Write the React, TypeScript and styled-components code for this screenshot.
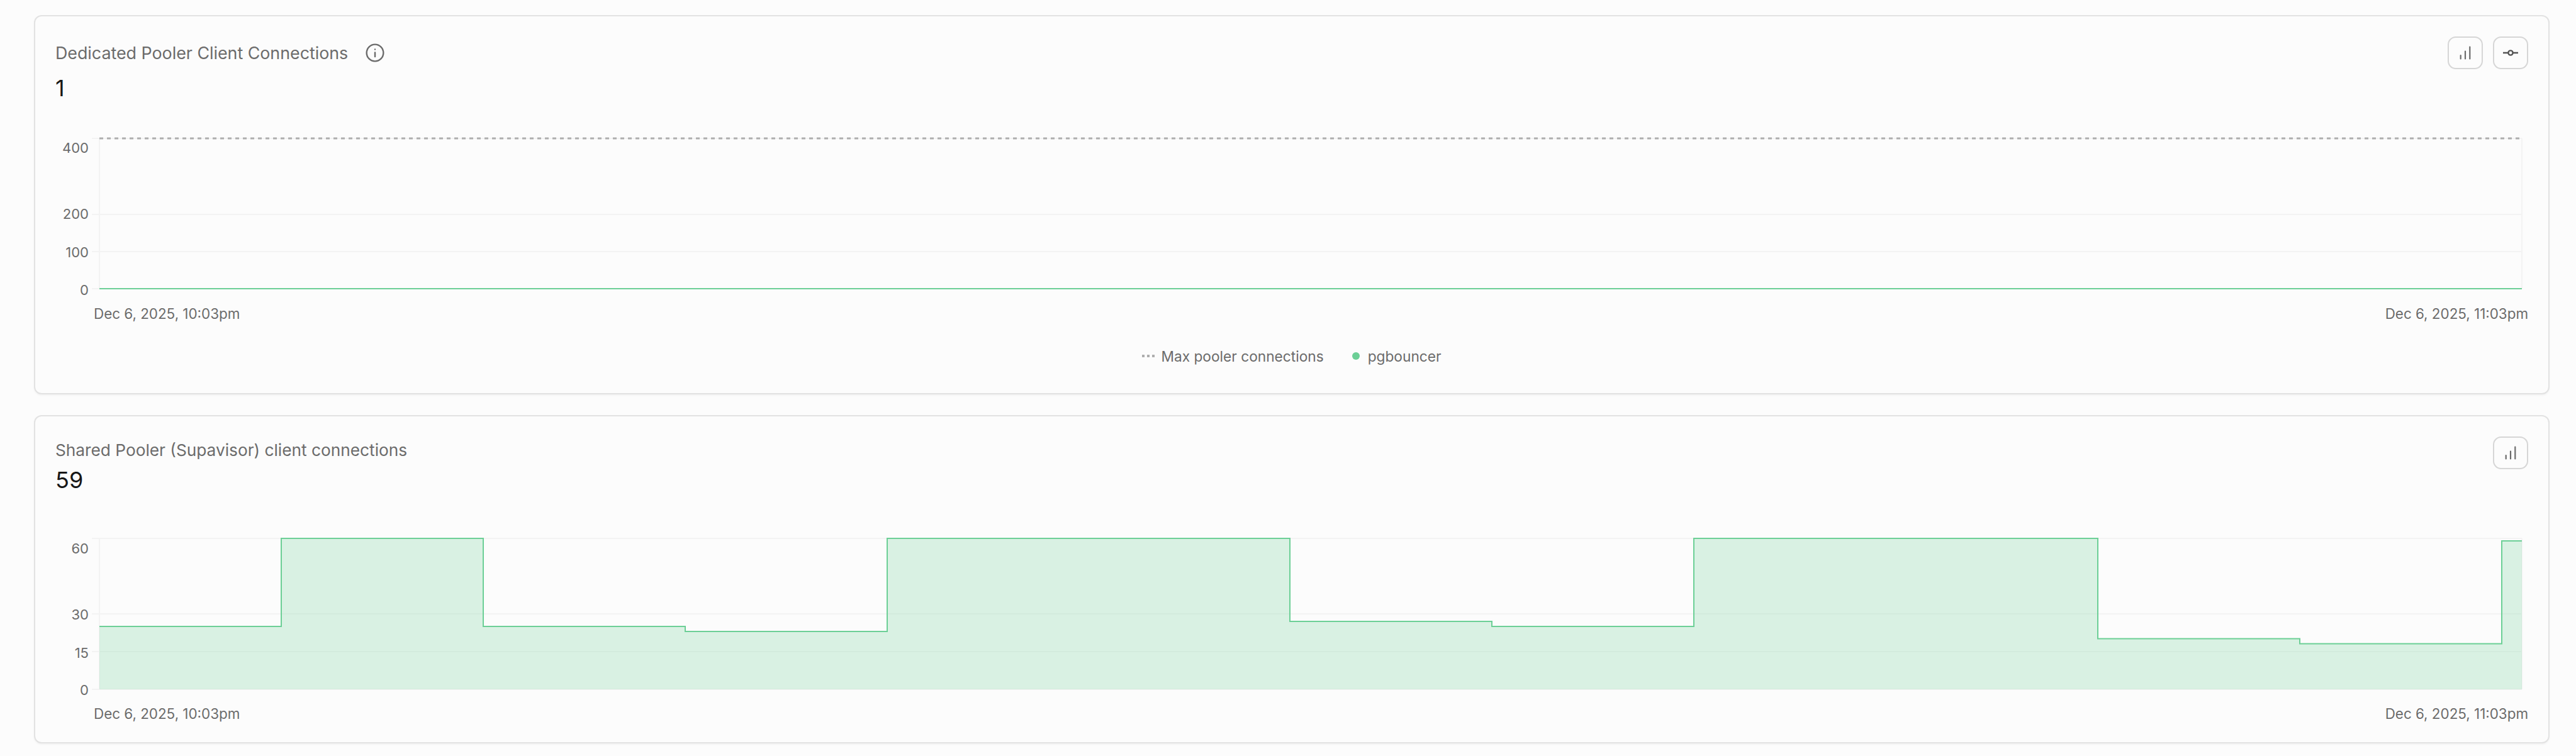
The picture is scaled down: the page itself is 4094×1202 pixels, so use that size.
import React from 'react';
import styled, { createGlobalStyle } from 'styled-components';

const Global = createGlobalStyle`
  html, body { margin: 0; padding: 0; background: #fcfcfc; }
  body { font-family: "Inter", "Liberation Sans", sans-serif; }
`;

const Page = styled.div`
  width: 4094px;
  height: 1202px;
  box-sizing: border-box;
  padding: 24px 42px 0 54px;
  display: flex;
  flex-direction: column;
  gap: 33px;
  overflow: hidden;
`;

const Card = styled.section<{ $h: number }>`
  box-sizing: border-box;
  height: ${(p) => p.$h}px;
  border: 2px solid #e2e2e2;
  border-radius: 12px;
  background: #fcfcfc;
  box-shadow: 0 2px 3px rgba(0, 0, 0, 0.04);
  padding: 32px 32px 0;
  display: flex;
  flex-direction: column;
`;

const Header = styled.header`
  display: flex;
  justify-content: space-between;
  align-items: flex-start;
  height: 154px;
  flex: none;
`;

const TitleBlock = styled.div`
  display: flex;
  flex-direction: column;
`;

const TitleRow = styled.div<{ $compact?: boolean }>`
  display: flex;
  align-items: center;
  gap: 27px;
  height: ${(p) => (p.$compact ? 42 : 52)}px;
`;

const Title = styled.h3<{ $size: number }>`
  margin: 0;
  font-size: ${(p) => p.$size}px;
  font-weight: 400;
  color: #6b6b6b;
  white-space: nowrap;
`;

const Value = styled.div<{ $compact?: boolean }>`
  margin-top: ${(p) => (p.$compact ? 6 : 9)}px;
  font-size: 36px;
  line-height: 42px;
  font-weight: 400;
  color: #171717;
`;

const Actions = styled.div`
  display: flex;
  gap: 16px;
`;

const IconButton = styled.button`
  box-sizing: border-box;
  width: 56px;
  height: 52px;
  padding: 0;
  border: 2px solid #d6d6d6;
  border-radius: 13px;
  background: #fcfcfc;
  display: flex;
  align-items: center;
  justify-content: center;
`;

const ChartFrame = styled.svg`
  display: block;
  flex: none;
`;

const AxisLabel = styled.text`
  font-family: "Inter", "Liberation Sans", sans-serif;
  font-size: 22px;
  fill: #6b6b6b;
  text-anchor: end;
`;

const DateRow = styled.div`
  display: flex;
  justify-content: space-between;
  align-items: center;
  height: 48px;
  flex: none;
  padding-left: 61px;
  font-size: 22.4px;
  color: #6b6b6b;
  white-space: nowrap;
`;

const Legend = styled.div`
  display: flex;
  justify-content: center;
  align-items: center;
  gap: 45px;
  height: 30px;
  margin-top: 29px;
  font-size: 22.7px;
  color: #6b6b6b;
`;

const LegendItem = styled.div<{ $gap: number }>`
  display: flex;
  align-items: center;
  gap: ${(p) => p.$gap}px;
`;

const DotSwatch = styled.span`
  width: 12px;
  height: 12px;
  border-radius: 50%;
  background: #6ccf96;
`;

const BarsIcon = () => (
  <svg width="20" height="22" viewBox="0 0 20 22" fill="none" stroke="#6b6b6b" strokeWidth="2.2" strokeLinecap="round">
    <path d="M2.7 20.5v-5.5M10 20.5V8.5M17.3 20.5V1.5" />
  </svg>
);

const NodeIcon = () => (
  <svg width="24" height="12" viewBox="0 0 24 12" fill="none" stroke="#555555" strokeWidth="2.4">
    <path d="M0 6h8M16 6h8" />
    <circle cx="12" cy="6" r="3.6" />
  </svg>
);

const InfoIcon = () => (
  <svg width="32" height="32" viewBox="0 0 24 24" fill="none" stroke="#6b6b6b" strokeWidth="1.8" strokeLinecap="round">
    <circle cx="12" cy="12" r="10" />
    <path d="M12 11.5v5M12 7.8v.1" />
  </svg>
);

const DashIcon = () => (
  <svg width="20" height="4" viewBox="0 0 20 4">
    <path d="M0 2h20" stroke="#aeaeae" strokeWidth="4" strokeDasharray="4 4" />
  </svg>
);

const WIDTH = 3930;
const HEIGHT = 262;
const PLOT_LEFT = 70;
const PLOT_RIGHT = 3920;
const TICK_LEFT = 58;
const GRID = '#f3f3f3';
const GREEN = '#6ccf96';

const GridLines = ({ rows }: { rows: number[] }) => (
  <g stroke={GRID} strokeWidth="2">
    <path d={`M${PLOT_LEFT} 8V${rows[rows.length - 1]}`} />
    <path d={`M${PLOT_RIGHT} 8V${rows[rows.length - 1]}`} />
    {rows.map((y) => (
      <path key={y} d={`M${TICK_LEFT} ${y}H${PLOT_RIGHT}`} />
    ))}
  </g>
);

const Axis = ({ labels }: { labels: [string, number][] }) => (
  <>
    {labels.map(([t, y]) => (
      <AxisLabel key={t} x="53" y={y}>{t}</AxisLabel>
    ))}
  </>
);

const DedicatedChart = () => (
  <ChartFrame width={WIDTH} height={HEIGHT} viewBox={`0 0 ${WIDTH} ${HEIGHT}`}>
    <GridLines rows={[8, 129, 188, 247]} />
    <path d={`M${PLOT_LEFT} 8H${PLOT_RIGHT}`} stroke="#aeaeae" strokeWidth="3" strokeDasharray="6 6" />
    <path d={`M${PLOT_LEFT} 247H${PLOT_RIGHT}`} stroke={GREEN} strokeWidth="2" />
    <Axis labels={[['400', 31], ['200', 136], ['100', 197], ['0', 257]]} />
  </ChartFrame>
);

// step series in chart coordinates: [segment end x, segment y]
const SERIES: [number, number][] = [
  [359, 148], [680, 8], [1001, 148], [1322, 156], [1962, 8], [2283, 140], [2604, 148],
  [3246, 8], [3567, 167.5], [3888, 175.5], [3920, 12],
];

const seriesLine = SERIES.reduce(
  (d, [x, y], i) => `${d}${i === 0 ? `M${PLOT_LEFT} ${y}` : `V${y}`}H${x}`,
  '',
);

const SharedChart = () => (
  <ChartFrame width={WIDTH} height={HEIGHT} viewBox={`0 0 ${WIDTH} ${HEIGHT}`}>
    <GridLines rows={[8, 128, 188, 248]} />
    <path d={`${seriesLine}V248H${PLOT_LEFT}Z`} fill={GREEN} fillOpacity="0.24" />
    <path d={seriesLine} fill="none" stroke={GREEN} strokeWidth="2" />
    <Axis labels={[['60', 32], ['30', 137], ['15', 198], ['0', 257]]} />
  </ChartFrame>
);

const Dates = () => (
  <DateRow>
    <span>Dec 6, 2025, 10:03pm</span>
    <span>Dec 6, 2025, 11:03pm</span>
  </DateRow>
);

export default function App() {
  return (
    <>
      <Global />
      <Page>
        <Card $h={603}>
          <Header>
            <TitleBlock>
              <TitleRow>
                <Title $size={26.8}>Dedicated Pooler Client Connections</Title>
                <InfoIcon />
              </TitleRow>
              <Value>1</Value>
            </TitleBlock>
            <Actions>
              <IconButton><BarsIcon /></IconButton>
              <IconButton><NodeIcon /></IconButton>
            </Actions>
          </Header>
          <DedicatedChart />
          <Dates />
          <Legend>
            <LegendItem $gap={10}><DashIcon />Max pooler connections</LegendItem>
            <LegendItem $gap={13}><DotSwatch />pgbouncer</LegendItem>
          </Legend>
        </Card>
        <Card $h={522}>
          <Header>
            <TitleBlock>
              <TitleRow $compact><Title $size={26.25}>Shared Pooler (Supavisor) client connections</Title></TitleRow>
              <Value $compact>59</Value>
            </TitleBlock>
            <Actions><IconButton><BarsIcon /></IconButton></Actions>
          </Header>
          <SharedChart />
          <Dates />
        </Card>
      </Page>
    </>
  );
}
